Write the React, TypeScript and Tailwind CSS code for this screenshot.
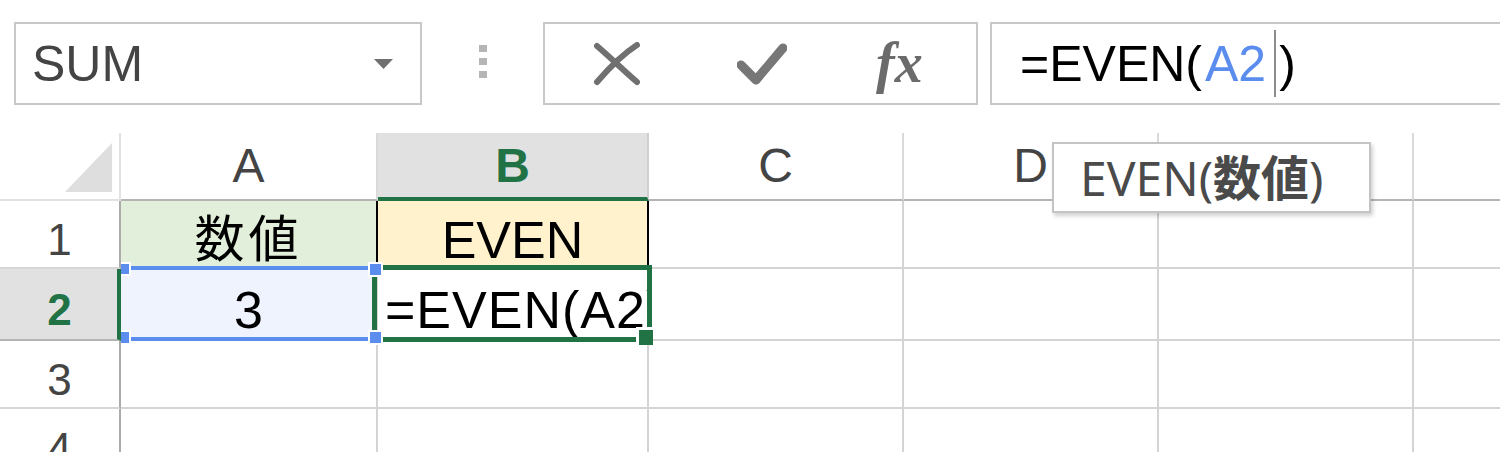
import React from "react";

const font = "font-['Liberation_Sans','Noto_Sans_CJK_JP',sans-serif]";

function Corner() {
  return (
    <div className="w-[121px] h-full border-r-2 border-b-2 border-[#e2e2e2] flex items-end justify-end pr-[7px] pb-[7px]">
      <svg width="47" height="49" viewBox="0 0 47 49">
        <polygon points="47,0 47,49 0,49" fill="#dedede" />
      </svg>
    </div>
  );
}

export default function App() {
  return (
    <div className={`relative w-[1500px] h-[452px] overflow-hidden bg-white ${font}`}>
      {/* Top bar */}
      <div className="flex items-start pt-[22px] h-[133px]">
        <div className="ml-[14px] w-[408px] h-[83px] border-2 border-[#c8c8c8] flex items-center justify-between pl-[16px] pr-[27px]">
          <span className="text-[50px] leading-none text-[#444]">SUM</span>
          <svg width="19" height="10" viewBox="0 0 19 10">
            <polygon points="0,0 19,0 9.5,10" fill="#707070" />
          </svg>
        </div>
        <div className="ml-[57px] mt-[23px] flex flex-col gap-[6px]">
          <div className="w-[8px] h-[7px] bg-[#b5b5b5]" />
          <div className="w-[8px] h-[7px] bg-[#b5b5b5]" />
          <div className="w-[8px] h-[7px] bg-[#b5b5b5]" />
        </div>
        <div className="ml-[56px] w-[435px] h-[83px] border-2 border-[#c8c8c8] flex items-center pl-[48px]">
          <svg width="48" height="44" viewBox="0 0 48 44" className="mt-[1px]">
            <path d="M4 4 C 18 16, 30 28, 44 40" stroke="#707070" strokeWidth="6" strokeLinecap="round" fill="none" />
            <path d="M44 3 C 30 12, 16 26, 4 40" stroke="#707070" strokeWidth="6" strokeLinecap="round" fill="none" />
          </svg>
          <svg width="50" height="46" viewBox="0 0 50 46" className="ml-[96px] mt-[4px]">
            <path d="M4 22 L19 37 L46 5" stroke="#777" strokeWidth="9" strokeLinecap="round" strokeLinejoin="round" fill="none" />
          </svg>
          <span className="ml-[89px] mt-[-2px] font-['Liberation_Serif',serif] italic font-bold text-[56px] leading-none text-[#6b6b6b]">
            fx
          </span>
        </div>
        <div className="ml-[12px] flex-1 h-[83px] border-2 border-r-0 border-[#c8c8c8] flex items-center pl-[28px]">
          <span className="text-[50px] leading-none text-black">=EVEN(</span>
          <span className="text-[50px] leading-none text-[#5b8def] ml-[3px]">A2</span>
          <span className="inline-block w-[2px] h-[67px] bg-[#8c8c8c] ml-[8px] mr-[3px]" />
          <span className="text-[50px] leading-none text-black">)</span>
        </div>
      </div>

      {/* Grid */}
      <div className="flex flex-col">
        {/* Header row */}
        <div className="flex h-[68px]">
          <Corner />
          <div className="w-[257px] border-r-2 border-r-[#dadada] border-b-2 border-b-[#b4b4b4] flex items-center justify-center text-[48px] leading-none text-[#444]">
            A
          </div>
          <div className="w-[271px] bg-[#e1e1e1] border-r-2 border-r-[#d0d0d0] border-b-4 border-b-[#217346] flex items-center justify-center pt-[2px] text-[48px] leading-none font-bold text-[#217346]">
            B
          </div>
          <div className="w-[255px] border-r-2 border-r-[#dadada] border-b-2 border-b-[#b4b4b4] flex items-center justify-center text-[48px] leading-none text-[#444]">
            C
          </div>
          <div className="w-[255px] border-r-2 border-r-[#dadada] border-b-2 border-b-[#b4b4b4] flex items-center justify-center text-[48px] leading-none text-[#444]">
            D
          </div>
          <div className="w-[255px] border-r-2 border-r-[#dadada] border-b-2 border-b-[#b4b4b4]" />
          <div className="flex-1 border-b-2 border-b-[#b4b4b4]" />
        </div>

        {/* Row 1 */}
        <div className="flex h-[68px]">
          <div className="w-[121px] border-r-2 border-r-[#ababab] border-b-2 border-b-[#d6d6d6] flex items-center justify-center pt-[12px] text-[44px] leading-none text-[#444]">
            1
          </div>
          <div className="w-[257px] bg-[#e2efda] border-r-2 border-r-black border-b-2 border-b-[#d4d4d4] flex items-center justify-center pt-[12px] text-[50px] leading-none text-black tracking-[4px]">
            数値
          </div>
          <div className="w-[271px] bg-[#fff2cc] border-r-2 border-r-black border-b-2 border-b-[#d4d4d4] flex items-center justify-center pt-[12px] text-[52px] leading-none text-black">
            EVEN
          </div>
          <div className="w-[255px] border-r-2 border-b-2 border-[#d4d4d4]" />
          <div className="w-[255px] border-r-2 border-b-2 border-[#d4d4d4]" />
          <div className="w-[255px] border-r-2 border-b-2 border-[#d4d4d4]" />
          <div className="flex-1 border-b-2 border-[#d4d4d4]" />
        </div>

        {/* Row 2 */}
        <div className="flex h-[72px]">
          <div className="w-[121px] bg-[#e1e1e1] border-r-4 border-r-[#217346] border-b-2 border-b-[#b4b4b4] flex items-center justify-center pt-[12px] pl-[2px] text-[44px] leading-none font-bold text-[#217346]">
            2
          </div>
          <div className="w-[257px] bg-[#eef3fd] border-r-2 border-b-2 border-[#d4d4d4] flex items-center justify-center pt-[12px] text-[52px] leading-none text-black">
            3
          </div>
          <div className="w-[271px] overflow-hidden whitespace-nowrap border-r-2 border-b-2 border-[#d4d4d4] flex items-center pl-[7px] pt-[12px] text-[52px] leading-none text-black tracking-[1px]">
            =EVEN(A2)
          </div>
          <div className="w-[255px] border-r-2 border-b-2 border-[#d4d4d4]" />
          <div className="w-[255px] border-r-2 border-b-2 border-[#d4d4d4]" />
          <div className="w-[255px] border-r-2 border-b-2 border-[#d4d4d4]" />
          <div className="flex-1 border-b-2 border-[#d4d4d4]" />
        </div>

        {/* Row 3 */}
        <div className="flex h-[68px]">
          <div className="w-[121px] border-r-2 border-r-[#ababab] border-b-2 border-b-[#d6d6d6] flex items-center justify-center pt-[12px] text-[44px] leading-none text-[#444]">
            3
          </div>
          <div className="w-[257px] border-r-2 border-b-2 border-[#d4d4d4]" />
          <div className="w-[271px] border-r-2 border-b-2 border-[#d4d4d4]" />
          <div className="w-[255px] border-r-2 border-b-2 border-[#d4d4d4]" />
          <div className="w-[255px] border-r-2 border-b-2 border-[#d4d4d4]" />
          <div className="w-[255px] border-r-2 border-b-2 border-[#d4d4d4]" />
          <div className="flex-1 border-b-2 border-[#d4d4d4]" />
        </div>

        {/* Row 4 */}
        <div className="flex h-[68px]">
          <div className="w-[121px] border-r-2 border-r-[#ababab] flex items-center justify-center pt-[12px] text-[44px] leading-none text-[#444]">
            4
          </div>
          <div className="w-[257px] border-r-2 border-[#d4d4d4]" />
          <div className="w-[271px] border-r-2 border-[#d4d4d4]" />
          <div className="w-[255px] border-r-2 border-[#d4d4d4]" />
          <div className="w-[255px] border-r-2 border-[#d4d4d4]" />
          <div className="w-[255px] border-r-2 border-[#d4d4d4]" />
          <div className="flex-1" />
        </div>
      </div>

      {/* Active cell frame (B2) */}
      <div className="absolute left-[372px] top-[265px] w-[280px] h-[77px] border-[5px] border-[#217346]" />
      <div className="absolute left-[636px] top-[327px] w-[17px] h-[18px] bg-[#217346] border-l-[3px] border-t-[3px] border-white" />

      {/* Reference highlight (A2) */}
      <div className="absolute left-[121px] top-[266px] w-[255px] h-[4px] bg-[#5b8def]" />
      <div className="absolute left-[121px] top-[337px] w-[255px] h-[4px] bg-[#5b8def]" />
      <div className="absolute left-[121px] top-[262px] w-[10px] h-[14px] bg-[#5b8def] border-r-2 border-y-2 border-white" />
      <div className="absolute left-[121px] top-[330px] w-[10px] h-[15px] bg-[#5b8def] border-r-2 border-y-2 border-white" />
      <div className="absolute left-[368px] top-[262px] w-[15px] h-[15px] bg-[#5b8def] border-2 border-white" />
      <div className="absolute left-[368px] top-[330px] w-[15px] h-[15px] bg-[#5b8def] border-2 border-white" />

      {/* Tooltip */}
      <div className="absolute left-[1052px] top-[142px] w-[319px] h-[71px] bg-white border-2 border-[#c4c4c4] shadow-[2px_3px_4px_rgba(0,0,0,0.18)] flex items-center pl-[26px] font-['Noto_Sans','Noto_Sans_CJK_JP',sans-serif] text-[48px] leading-none text-[#4a4a4a]">
        <span>EVEN(</span>
        <span className="font-bold">数値</span>
        <span>)</span>
      </div>
    </div>
  );
}
